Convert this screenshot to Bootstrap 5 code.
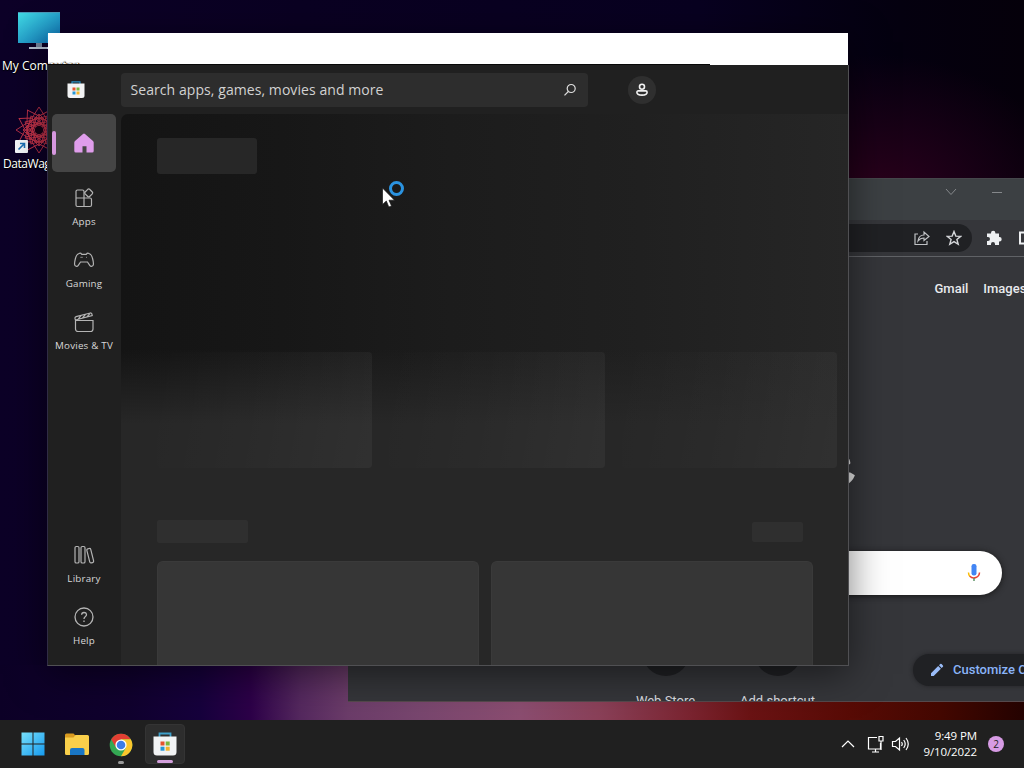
<!DOCTYPE html>
<html lang="en">
<head>
  <meta charset="UTF-8">
  <title>Desktop</title>
  <link href="https://cdn.jsdelivr.net/npm/bootstrap@5.3.0/dist/css/bootstrap.min.css" rel="stylesheet">
  <style>
    body {
      width: 1024px;
      height: 768px;
      overflow: hidden;
      font-family: "Open Sans", "Noto Sans", sans-serif;
      background: #0c0027;
    }
    svg { display: block; flex-shrink: 0; }
    .desktop {
      height: 768px;
      background:
        linear-gradient(90deg, #0c0026 0, #10002e 130px, #16003c 200px, #2c0048 250px, #54285e 300px, #6b3c69 348px, #78466e 420px, #8b4d70 520px, #8a4058 600px, #7a2430 690px, #6a1314 750px, #580b05 850px, #430700 940px, #240200 1024px) 0 665px / 100% 55px no-repeat,
        radial-gradient(ellipse 200px 150px at 875px 205px, #2e001c 0, #1f0018 35%, transparent 100%),
        linear-gradient(90deg, #0c0027 0, #0a0022 300px, #080020 700px, #04000f 900px, #05000a 1024px);
    }

    /* desktop shortcuts */
    .shortcut { position: absolute; width: 76px; }
    .shortcut-label {
      position: absolute;
      z-index: 3;
      left: 0;
      color: #fff;
      font-size: 12px;
      line-height: 16px;
      white-space: nowrap;
      text-shadow: 0 1px 1px #000, 0 0 1px #000, 1px 0 1px #000;
    }
    .shortcut-label.tight { letter-spacing: -.45px; }

    /* browser window */
    .browser {
      position: absolute;
      left: 348px; top: 178px;
      width: 724px; height: 524px;
      background: #35363a;
      overflow: hidden;
      z-index: 1;
      border-bottom: 1px solid #55494c;
      border-top: 1px solid #45474b;
      font-family: Roboto, sans-serif;
      color: #e8eaed;
    }
    .browser-title { height: 41px; background: #3c4043; padding-left: 596px; }
    .browser-tools { height: 37px; border-bottom: 1px solid #606266; background: #35363a; }
    .address { width: 574px; height: 28px; border-radius: 14px; background: #202124; padding-right: 10px; margin-left: 50px; }
    .extensions { margin-left: 14px; }
    .browser-links { height: 62px; padding: 2px 0 0 586.5px; gap: 15px; font-size: 13px; font-weight: 500; }
    .logo-row { height: 232px; padding-left: 218px; padding-top: 90px; }
    .logo-word { font-family: Lato, sans-serif; font-weight: 900; font-size: 77px; line-height: 100px; color: #e4e4e4; width: 284px; text-align: right; }
    .logo-last { display: inline-block; transform: rotate(-20deg); }
    .page-search { width: 584px; height: 44px; border-radius: 22px; background: #fff; margin-left: 70px; padding-right: 19.5px; box-shadow: 0 1px 6px #171717; }
    .tiles { height: 106px; padding: 33px 0 0 261.5px; }
    .tile-link { width: 112px; font-size: 13px; line-height: 14px; color: #dcdde0; }
    .tile-dot { width: 48px; height: 48px; flex-shrink: 0; border-radius: 50%; background: #202124; margin-bottom: 18px; }
    .customize { position: absolute; left: 565px; top: 475px; width: 160px; height: 32px; border-radius: 16px; background: #202124; color: #8ab4f8; font-size: 13px; font-weight: 500; padding-left: 17px; gap: 9px; white-space: nowrap; box-shadow: 0 0 4px #222326; }

    /* store window */
    .store-title { position: absolute; z-index: 2; left: 48px; top: 33px; width: 800px; height: 32px; background: #fff; }
    .store-edge { position: absolute; z-index: 4; left: 48px; top: 64px; width: 662px; height: 1px; background: #080808; }
    .store {
      position: absolute;
      z-index: 4;
      left: 47px; top: 65px;
      width: 802px; height: 601px;
      border: 1px solid #505053;
      border-top: 0;
      border-left-color: #302c45;
      background: #202020;
      overflow: hidden;
    }
    .store-shade { position: absolute; z-index: 2; left: 47px; top: 34px; width: 802px; height: 632px; box-shadow: 0 8px 36px rgba(0, 0, 0, .5); }
    .store-head { height: 49px; }
    .store-logo { margin-left: 18.5px; }
    .store-search { width: 467px; height: 34px; margin-left: 36px; border-radius: 4px; background: #2d2d2d; color: #d2d2d2; font-size: 14px; padding: 0 11px 0 10px; letter-spacing: .07px; }
    .account { width: 28px; height: 28px; border-radius: 50%; background: #2f2f2f; margin-left: 40.500px; }
    .side { width: 73px; flex-shrink: 0; color: #d8d8d8; font-size: 9.8px; letter-spacing: .2px; padding-bottom: 12px; }
    .side-item { width: 72px; height: 62px; padding-top: 15px; gap: 7px; line-height: 12px; white-space: nowrap; }
    .side-home { width: 64px; height: 58px; margin-left: 4px; border-radius: 5px; background: #454545; }
    .side-home::before { content: ""; width: 4px; height: 24px; border-radius: 2px; background: #d698df; margin-right: 18px; }
    .store-page {
      border-top-left-radius: 7px;
      background:
        linear-gradient(180deg, transparent 235px, #272727 310px),
        linear-gradient(90deg, #141414 0, #171717 160px, #1c1c1c 330px, #202020 520px, #262626 727px);
      padding: 24px 0 0 36px;
    }
    .ghost-title { width: 100px; height: 36px; border-radius: 3px; background: #272727; margin-bottom: 178px; }
    .ghost-banners { gap: 17px; margin-bottom: 52px; }
    .ghost-banner { width: 215.3px; height: 116px; border-radius: 4px; background: linear-gradient(100deg, transparent 0, rgba(255, 255, 255, .015) 45%, rgba(255, 255, 255, .045) 100%); }
    .ghost-heading { width: 656px; margin-bottom: 18px; padding-right: 10px; }
    .ghost-line { width: 91px; height: 23px; border-radius: 2px; background: #2f2f2f; }
    .ghost-more { width: 51px; height: 20px; border-radius: 2px; background: #2f2f2f; }
    .ghost-card { width: 322px; height: 104px; border-radius: 6px 6px 0 0; background: #363636; border: 1px solid #3a3a3a; border-bottom: 0; }

    .pointer { position: absolute; z-index: 6; left: 381px; top: 179px; }

    /* taskbar */
    .taskbar { position: absolute; z-index: 5; left: 0; right: 0; bottom: 0; height: 48px; background: #202020; color: #fff; }
    .task-list { margin-left: 12.5px; }
    .task-btn { width: 40px; height: 40px; border-radius: 4px; margin-right: 4px; }
    .task-btn.open { background: #2d2d2d; border: 1px solid #343434; }
    .task-run { width: 6px; height: 3px; border-radius: 2px; background: #9a9a9a; }
    .task-run.wide { width: 16px; background: #d3a0dc; }
    .clock { width: 62px; font-size: 11.5px; line-height: 16px; letter-spacing: -.1px; white-space: nowrap; }
    .notice { width: 16px; height: 16px; border-radius: 50%; background: #d79be4; color: #222; font-size: 10px; line-height: 16px; margin-left: 11px; }
  </style>
</head>
<body>
  <div class="desktop position-relative overflow-hidden">

    <div class="shortcut" style="left: 17px; top: 11px">
      <svg width="44" height="40" viewBox="0 0 44 40">
        <defs><linearGradient id="screen" x1="0" y1="0" x2="1" y2="1"><stop offset="0" stop-color="#42dbe4"/><stop offset="1" stop-color="#0c6eb4"/></linearGradient></defs>
        <rect x="1" y="1" width="42" height="31" fill="url(#screen)"/>
        <path d="M1 1.500h42" stroke="#4a99b8"/>
        <path d="M19 32h6v4h-6z" fill="#73839b"/><path d="M12 36h19v2H12z" fill="#b5c2d3"/>
      </svg>
    </div>
    <div class="shortcut-label" style="left: 2px; top: 58px">My Computer</div>
    <div class="shortcut" style="left: 15px; top: 106px">
      <svg width="48" height="48" viewBox="0 0 48 48" fill="none" stroke="#c23349" stroke-width=".9">
        <g id="petals">
          <path d="M24 1l7 11-7 8-7-8zM24 8l12 12-12 13-12-13z"/>
        </g>
        <use href="#petals" transform="rotate(30 24 24)"/><use href="#petals" transform="rotate(60 24 24)"/>
        <use href="#petals" transform="rotate(90 24 24)"/><use href="#petals" transform="rotate(120 24 24)"/>
        <use href="#petals" transform="rotate(150 24 24)"/><use href="#petals" transform="rotate(210 24 24)"/>
        <use href="#petals" transform="rotate(180 24 24)"/><use href="#petals" transform="rotate(240 24 24)"/>
        <use href="#petals" transform="rotate(270 24 24)"/><use href="#petals" transform="rotate(300 24 24)"/><use href="#petals" transform="rotate(330 24 24)"/>
        <circle cx="24" cy="24" r="4" fill="#140014" stroke="none"/>
        <rect x="0" y="34" width="13" height="13" rx="1" fill="#f5f8fb" stroke="none"/>
        <path d="M3.500 43.500l6-6M5 37.500h4.500V42" stroke="#1b70b5" stroke-width="1.600"/>
      </svg>
    </div>
    <div class="shortcut-label tight" style="left: 3px; top: 156px">DataWagon</div>

    <div class="browser">
      <div class="browser-title d-flex">
        <svg width="70" height="26" viewBox="0 0 70 26" fill="none" stroke="#85888b"><path d="M2 10l5 5.500 5-5.500M48 13.500h10"/></svg>
      </div>
      <div class="browser-tools d-flex align-items-center">
        <div class="address d-flex align-items-center justify-content-end gap-3">
          <svg width="16" height="16" viewBox="0 0 16 16" fill="none" stroke="#bfc1c4" stroke-width="1.200"><path d="M4 4H1v10.500h12V11"/><path d="M4 11c.5-4 3-6 6-6V2l5 4.500-5 4V8c-3 0-4.500 1-6 3z"/></svg>
          <svg width="16" height="16" viewBox="0 0 16 16" fill="none" stroke="#d5d7da" stroke-width="1.400"><path d="M8 1.500l1.800 4.600 4.900.3-3.800 3.100 1.300 4.800L8 11.600l-4.200 2.700 1.300-4.800L1.300 6.400l4.900-.3z"/></svg>
        </div>
        <svg class="extensions" width="50" height="18" viewBox="0 0 50 18"><path d="M1 4.500h4V4a2.200 2.200 0 0 1 4.400 0v.5H13V8h.5a2.200 2.200 0 0 1 0 4.400H13V16H9v-1a2 2 0 0 0-4 0v1H1v-4h1a2 2 0 0 0 0-4H1z" fill="#eef0f2"/><path d="M34 3.500h14v11H34z" fill="none" stroke="#eef0f2" stroke-width="2"/></svg>
      </div>
      <div class="browser-links d-flex align-items-center"><span>Gmail</span><span>Images</span></div>
      <div class="logo-row"><div class="logo-word">Googl<span class="logo-last">e</span></div></div>
      <div class="page-search d-flex align-items-center justify-content-end">
        <svg width="18" height="20" viewBox="0 0 18 20" fill="none" stroke-width="1.500">
          <rect x="6.500" y="1" width="5" height="11.500" rx="2.200" fill="#4285f4"/>
          <path d="M3.500 9.500A6 6 0 0 0 5 13.500" stroke="#fbbc04"/><path d="M4.800 13.300A5.700 5.700 0 0 0 14.500 9.500" stroke="#ea4335"/><path d="M9 15v3" stroke="#5f9567"/>
        </svg>
      </div>
      <div class="tiles d-flex">
        <div class="tile-link d-flex flex-column align-items-center"><div class="tile-dot"></div>Web Store</div>
        <div class="tile-link d-flex flex-column align-items-center"><div class="tile-dot"></div>Add shortcut</div>
      </div>
      <div class="customize d-flex align-items-center">
        <svg width="14" height="14" viewBox="0 0 14 14" fill="#9abcf8"><path d="M1 10.300V13h2.700l7.200-7.200-2.700-2.700zM9 2.300l1.200-1.200a1 1 0 0 1 1.400 0l1.300 1.300a1 1 0 0 1 0 1.400L11.700 5z"/></svg>
        <span>Customize Chrome</span>
      </div>
    </div>

    <div class="store-shade"></div>
    <div class="store-title"></div>
    <div class="store-edge"></div>
    <div class="store d-flex flex-column">
      <div class="store-head d-flex align-items-center flex-shrink-0">
        <svg class="store-logo" width="18" height="18" viewBox="0 0 18 18">
          <path d="M5 3.500V.8h8v2.700" fill="none" stroke="#268fc4" stroke-width="1.200"/>
          <path d="M.5 2.500h17V14.500a2.500 2.500 0 0 1-2.500 2.500H3A2.500 2.500 0 0 1 .5 14.500z" fill="#f2f3f4"/>
          <path d="M5.500 6.500h3v3h-3z" fill="#e5532d"/><path d="M9.500 6.500h3v3h-3z" fill="#7bb53b"/><path d="M5.500 10.500h3v3h-3z" fill="#2796d5"/><path d="M9.500 10.500h3v3h-3z" fill="#f3b32b"/>
        </svg>
        <div class="store-search d-flex align-items-center justify-content-between">
          <span>Search apps, games, movies and more</span>
          <svg width="14" height="14" viewBox="0 0 14 14" fill="none" stroke="#dedede" stroke-width="1.200"><circle cx="8.200" cy="5.500" r="4"/><path d="M5.300 8.500L1.500 12.300"/></svg>
        </div>
        <div class="account d-flex align-items-center justify-content-center">
          <svg width="14" height="14" viewBox="0 0 14 14" fill="none" stroke="#f2f2f2" stroke-width="1.600"><circle cx="7" cy="3.800" r="2.500"/><path d="M3.200 7.900h7.600a1.300 1.300 0 0 1 1.300 1.300c0 2-2 2.900-5.100 2.900s-5.100-.9-5.100-2.900a1.300 1.300 0 0 1 1.300-1.300z"/></svg>
        </div>
      </div>

      <div class="d-flex flex-grow-1">
        <div class="side d-flex flex-column">
          <div class="side-home d-flex align-items-center">
            <svg width="20" height="20" viewBox="0 0 20 20" fill="#df9deb"><path d="M9 .9a1.500 1.500 0 0 1 2 0l8 7a2 2 0 0 1 .7 1.500V18a1.500 1.500 0 0 1-1.500 1.500H12.500v-6.300h-4v6.300H1.800A1.500 1.500 0 0 1 .3 18V9.400A2 2 0 0 1 1 7.900z"/></svg>
          </div>
          <div class="side-item d-flex flex-column align-items-center">
            <svg width="22" height="22" viewBox="0 0 22 22" fill="none" stroke="#b4b4b4" stroke-width="1.200"><path d="M11 11V4.500A1.500 1.500 0 0 0 9.500 3h-5A1.500 1.500 0 0 0 3 4.500V18a1.500 1.500 0 0 0 1.500 1.500H17a1.500 1.500 0 0 0 1.500-1.500v-5.500A1.500 1.500 0 0 0 17 11H3M11 11v8.500"/><path d="M14.800 2.300a1.300 1.300 0 0 1 1.800 0l2.700 2.700a1.300 1.300 0 0 1 0 1.800l-2.700 2.700a1.300 1.300 0 0 1-1.800 0l-2.700-2.700a1.300 1.300 0 0 1 0-1.800z"/></svg>
            <span>Apps</span>
          </div>
          <div class="side-item d-flex flex-column align-items-center">
            <svg width="22" height="22" viewBox="0 0 22 22" fill="none" stroke="#b4b4b4" stroke-width="1.200"><path d="M6 4.500c1-.5 2-.3 2.700.8h4.600c.7-1.100 1.700-1.300 2.700-.8 2 .6 3 2.500 3.700 5.500.5 2 .8 4.500.7 5.500-.2 2-2.500 2.500-3.700.8L14.500 13h-7l-2.200 3.300c-1.200 1.700-3.500 1.200-3.700-.8-.1-1 .2-3.500.7-5.500C3 7 4 5.100 6 4.500z"/><path d="M7.300 8.300h2.500M13 8.300h1" stroke-width=".7"/></svg>
            <span>Gaming</span>
          </div>
          <div class="side-item d-flex flex-column align-items-center">
            <svg width="22" height="22" viewBox="0 0 22 22" fill="none" stroke="#b4b4b4" stroke-width="1.200"><path d="M2.500 9.500h17.500V18a2.500 2.500 0 0 1-2.500 2.500H5A2.500 2.500 0 0 1 2.500 18zM2.500 9L2 7.500a1.500 1.500 0 0 1 1.100-1.800L17.300 2a1.300 1.300 0 0 1 1.600 1l.3 1.500L2.500 9M5 8.300L8 4.600M9.500 7L12.500 3.400M14 5.800L17 2.300"/></svg>
            <span>Movies &amp; TV</span>
          </div>
          <div class="side-item mt-auto d-flex flex-column align-items-center">
            <svg width="22" height="22" viewBox="0 0 22 22" fill="none" stroke="#b4b4b4" stroke-width="1.200"><rect x="2" y="2.500" width="4" height="16.500" rx="1.300"/><rect x="8" y="2.500" width="4" height="16.500" rx="1.300"/><rect x="15.300" y="4.500" width="4" height="14.500" rx="1.300" transform="rotate(-14 17 12)"/></svg>
            <span>Library</span>
          </div>
          <div class="side-item d-flex flex-column align-items-center">
            <svg width="22" height="22" viewBox="0 0 22 22" fill="none" stroke="#b4b4b4" stroke-width="1.300"><circle cx="11" cy="11" r="9"/><path d="M8.600 8.800A2.400 2.400 0 0 1 11 6.500c3 0 3.200 3 1.200 4.300-.9.600-1.200 1.100-1.200 2.200M11 14.500V16"/></svg>
            <span>Help</span>
          </div>
        </div>

        <div class="store-page flex-grow-1">
          <div class="ghost-title"></div>
          <div class="ghost-banners d-flex">
            <div class="ghost-banner"></div>
            <div class="ghost-banner"></div>
            <div class="ghost-banner"></div>
          </div>
          <div class="ghost-heading d-flex align-items-center justify-content-between">
            <div class="ghost-line"></div>
            <div class="ghost-more"></div>
          </div>
          <div class="d-flex gap-2">
            <div class="ghost-card me-1"></div>
            <div class="ghost-card"></div>
          </div>
        </div>
      </div>
    </div>

    <svg class="pointer" width="26" height="30" viewBox="0 0 26 30">
      <circle cx="15.500" cy="9.500" r="6" fill="none" stroke="#2b93e0" stroke-width="3"/>
      <path d="M1.500 9v16.500l3.800-3.500 2.500 6 2.700-1.100L8 21.200h5.500z" fill="#fff" stroke="#181818" stroke-width=".7"/>
    </svg>

    <div class="taskbar d-flex align-items-center">
      <div class="task-list d-flex align-items-center">
        <div class="task-btn d-flex align-items-center justify-content-center">
          <svg width="24" height="24" viewBox="0 0 24 24">
            <defs><linearGradient id="win" gradientUnits="userSpaceOnUse" x1="0" y1="0" x2="24" y2="24"><stop offset="0" stop-color="#79e1fb"/><stop offset="1" stop-color="#1499ef"/></linearGradient></defs>
            <path d="M.5 .5h11v11H.5zM12.500 .5h11v11h-11zM.5 12.500h11v11H.5zM12.500 12.500h11v11h-11z" fill="url(#win)"/>
          </svg>
        </div>
        <div class="task-btn d-flex align-items-center justify-content-center">
          <svg width="26" height="24" viewBox="0 0 26 24">
            <path d="M1 3A1.500 1.500 0 0 1 2.500 1.500h7L12 4v4H1z" fill="#d99b20"/>
            <path d="M1 5.500h8.500l2-2.500h12A1.500 1.500 0 0 1 25 4.500v17a1.500 1.500 0 0 1-1.500 1.500h-21A1.500 1.500 0 0 1 1 21.500z" fill="#f9cf4a"/>
            <path d="M6 23v-5a2 2 0 0 1 2-2h10.500a2 2 0 0 1 2 2v5z" fill="#1976c5"/>
          </svg>
        </div>
        <div class="task-btn d-flex flex-column align-items-center justify-content-end">
          <svg width="24" height="24" viewBox="0 0 24 24">
            <circle cx="12" cy="12" r="11.300" fill="#34a853"/>
            <path d="M12 .7a11.300 11.300 0 0 1 9.800 5.650H12L7.100 14.800 2.200 6.350A11.300 11.300 0 0 1 12 .7z" fill="#e23f33"/>
            <path d="M21.800 6.350A11.300 11.300 0 0 1 12 23.300l4.900-8.500L12 6.350z" fill="#fbc62d"/>
            <circle cx="12" cy="12" r="5.600" fill="#fff"/><circle cx="12" cy="12" r="4.300" fill="#3c7de8"/>
          </svg>
          <div class="task-run mt-1"></div>
        </div>
        <div class="task-btn open d-flex flex-column align-items-center justify-content-end">
          <svg width="24" height="24" viewBox="0 0 24 24">
            <path d="M6.500 5V1.500h11V5" fill="none" stroke="#3d9fc9" stroke-width="1.800"/>
            <path d="M.5 4.500h23V20a3.500 3.500 0 0 1-3.500 3.500H4A3.500 3.500 0 0 1 .5 20z" fill="#f2f3f4"/>
            <path d="M7.500 9.500h4v4h-4z" fill="#e5532d"/><path d="M12.700 9.500h4v4h-4z" fill="#7bb53b"/><path d="M7.500 14.700h4v4h-4z" fill="#2796d5"/><path d="M12.700 14.700h4v4h-4z" fill="#f3b32b"/>
          </svg>
          <div class="task-run wide mt-1"></div>
        </div>
      </div>
      <div class="d-flex align-items-center ms-auto" style="margin-right: 20px">
        <svg width="70" height="20" viewBox="0 0 70 20" fill="none" stroke="#fff" stroke-width="1.200">
          <path d="M1 13l6-6 6 6"/>
          <path d="M36 3.500h-8.500v11.500h12V9M31 18h7M34.500 15v3"/><path d="M38 2.500h4V7h-4zM40 7v9"/>
          <path d="M51.500 7.500h3l4-3.500v12l-4-3.500h-3zM60.500 8q1.500 2 0 4M62.700 6q3 4 0 8M65 4q4.500 6 0 12"/>
        </svg>
        <div class="clock text-end ms-1">9:49 PM<br>9/10/2022</div>
        <div class="notice text-center">2</div>
      </div>
    </div>
  </div>
  <script src="https://cdn.jsdelivr.net/npm/bootstrap@5.3.0/dist/js/bootstrap.bundle.min.js"></script>
</body>
</html>
